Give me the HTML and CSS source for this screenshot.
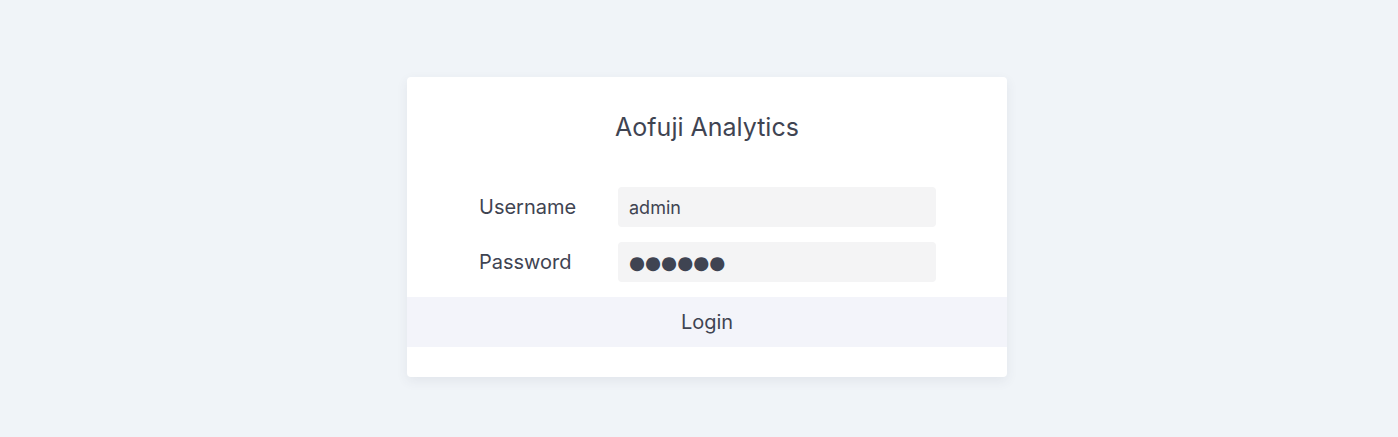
FILE: index.html
```html
<!DOCTYPE html>
<html lang="en">
<head>
<meta charset="utf-8">
<title>Aofuji Analytics</title>
<link rel="stylesheet" href="styles.css">
</head>
<body>
<main class="page">
  <form class="card" onsubmit="return false">
    <h1 class="title">Aofuji Analytics</h1>
    <div class="fields">
      <label class="row">
        <span class="label">Username</span>
        <input class="input" type="text" value="admin">
      </label>
      <label class="row">
        <span class="label">Password</span>
        <input class="input input-secret" type="text" value="●●●●●●" aria-label="Password (masked)">
      </label>
    </div>
    <button class="login" type="submit">Login</button>
  </form>
</main>
</body>
</html>
```

FILE: styles.css
```css
* { box-sizing: border-box; }
html, body { margin: 0; padding: 0; }
body {
  background: #f0f4f8;
  font-family: Inter, "Noto Sans", sans-serif;
  color: #3f4452;
}
.page {
  height: 437px;
  display: flex;
  justify-content: center;
  padding-top: 77px;
  padding-left: 16px;
}
.card {
  width: 600px;
  height: 300px;
  background: #ffffff;
  border-radius: 4px;
  box-shadow: 0 4px 12px rgba(60, 70, 90, 0.08);
  padding-top: 27px;
  display: flex;
  flex-direction: column;
}
.title {
  margin: 0;
  height: 46px;
  line-height: 46px;
  font-size: 25px;
  font-weight: 400;
  text-align: center;
}
.fields {
  margin-top: 37px;
  padding: 0 71px 0 72px;
  display: flex;
  flex-direction: column;
  gap: 15px;
}
.row {
  display: flex;
  align-items: center;
}
.label {
  width: 139px;
  font-size: 20px;
}
.input {
  flex: 1;
  height: 40px;
  border: none;
  border-radius: 4px;
  background: #f4f4f5;
  padding: 0 11px;
  font-family: Inter, "Noto Sans", sans-serif;
  font-size: 18px;
  color: #3f4452;
  outline: none;
}
.input-secret {
  font-family: "DejaVu Sans", sans-serif;
  font-size: 18.4px;
}
.login {
  margin-top: 15px;
  height: 50px;
  border: none;
  background: #f3f4fa;
  font-family: Inter, "Noto Sans", sans-serif;
  font-size: 20px;
  color: #3f4452;
  cursor: pointer;
}
```
